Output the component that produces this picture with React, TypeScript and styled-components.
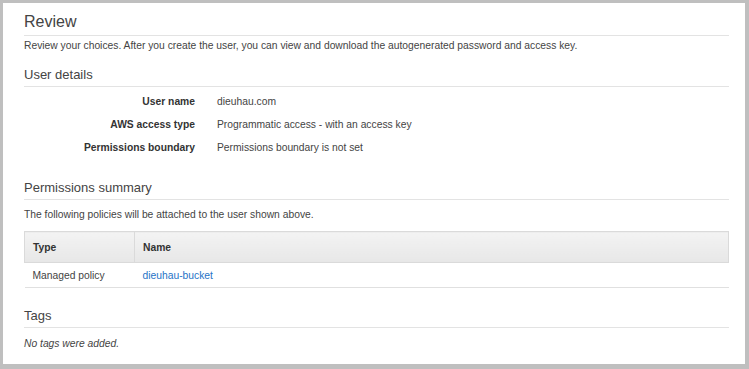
import React from "react";
import styled, { createGlobalStyle } from "styled-components";

const GlobalStyle = createGlobalStyle`
    html, body {
        margin: 0;
        padding: 0;
        background: #fff;
    }
    body {
        font-family: "Liberation Sans", Arial, sans-serif;
        color: #444;
    }
`;

const Frame = styled.div`
    box-sizing: border-box;
    width: 749px;
    height: 369px;
    border-style: solid;
    border-color: #bfbfbf;
    border-width: 3px 4px 5px 3px;
    padding: 9px 16px 0 21px;
    display: flex;
    flex-direction: column;
`;

const Heading = styled.h2<{ $size?: number; $gap?: number }>`
    margin: ${({ $gap }) => $gap ?? 0}px 0 0;
    padding-bottom: 3px;
    font-size: ${({ $size }) => $size ?? 13}px;
    line-height: ${({ $size }) => ($size && $size > 14 ? 20 : 16)}px;
    font-weight: 400;
    color: #444;
    border-bottom: 1px solid #e3e3e3;
`;

const Text = styled.p<{ $gap?: number; $italic?: boolean }>`
    margin: ${({ $gap }) => $gap ?? 0}px 0 0;
    font-size: 10.3px;
    line-height: 14px;
    color: #444;
    font-style: ${({ $italic }) => ($italic ? "italic" : "normal")};
`;

const Details = styled.dl`
    margin: 3px 0 0;
    display: grid;
    grid-template-columns: 171px 1fr;
    column-gap: 22px;
    grid-auto-rows: 23px;
    align-items: center;
    font-size: 10.3px;
`;

const Label = styled.dt`
    text-align: right;
    font-weight: 700;
    color: #333;
`;

const Value = styled.dd`
    margin: 0;
    color: #444;
`;

const Table = styled.table`
    margin-top: 9px;
    width: 100%;
    border-collapse: collapse;
    font-size: 10.3px;
`;

const HeadCell = styled.th<{ $width?: number }>`
    box-sizing: border-box;
    width: ${({ $width }) => ($width ? `${$width}px` : "auto")};
    height: 31px;
    padding: 0 8px;
    text-align: left;
    font-weight: 700;
    color: #333;
    background: linear-gradient(#f3f3f3, #e7e7e7);
    border: 1px solid #dadada;
`;

const Cell = styled.td`
    height: 24px;
    padding: 0 8px;
    color: #444;
    border-bottom: 1px solid #e0e0e0;
`;

const Link = styled.a`
    color: #1f73c6;
    text-decoration: none;
`;

export default function App() {
    return (
        <>
            <GlobalStyle />
            <Frame>
                <Heading $size={16}>Review</Heading>
                <Text $gap={3}>
                    Review your choices. After you create the user, you can view and download the autogenerated password and access key.
                </Text>

                <Heading $gap={14}>User details</Heading>
                <Details>
                    <Label>User name</Label>
                    <Value>dieuhau.com</Value>
                    <Label>AWS access type</Label>
                    <Value>Programmatic access - with an access key</Value>
                    <Label>Permissions boundary</Label>
                    <Value>Permissions boundary is not set</Value>
                </Details>

                <Heading $gap={21}>Permissions summary</Heading>
                <Text $gap={8}>The following policies will be attached to the user shown above.</Text>
                <Table>
                    <thead>
                        <tr>
                            <HeadCell $width={110}>Type</HeadCell>
                            <HeadCell>Name</HeadCell>
                        </tr>
                    </thead>
                    <tbody>
                        <tr>
                            <Cell>Managed policy</Cell>
                            <Cell>
                                <Link href="#">dieuhau-bucket</Link>
                            </Cell>
                        </tr>
                    </tbody>
                </Table>

                <Heading $gap={20}>Tags</Heading>
                <Text $gap={9} $italic>
                    No tags were added.
                </Text>
            </Frame>
        </>
    );
}
